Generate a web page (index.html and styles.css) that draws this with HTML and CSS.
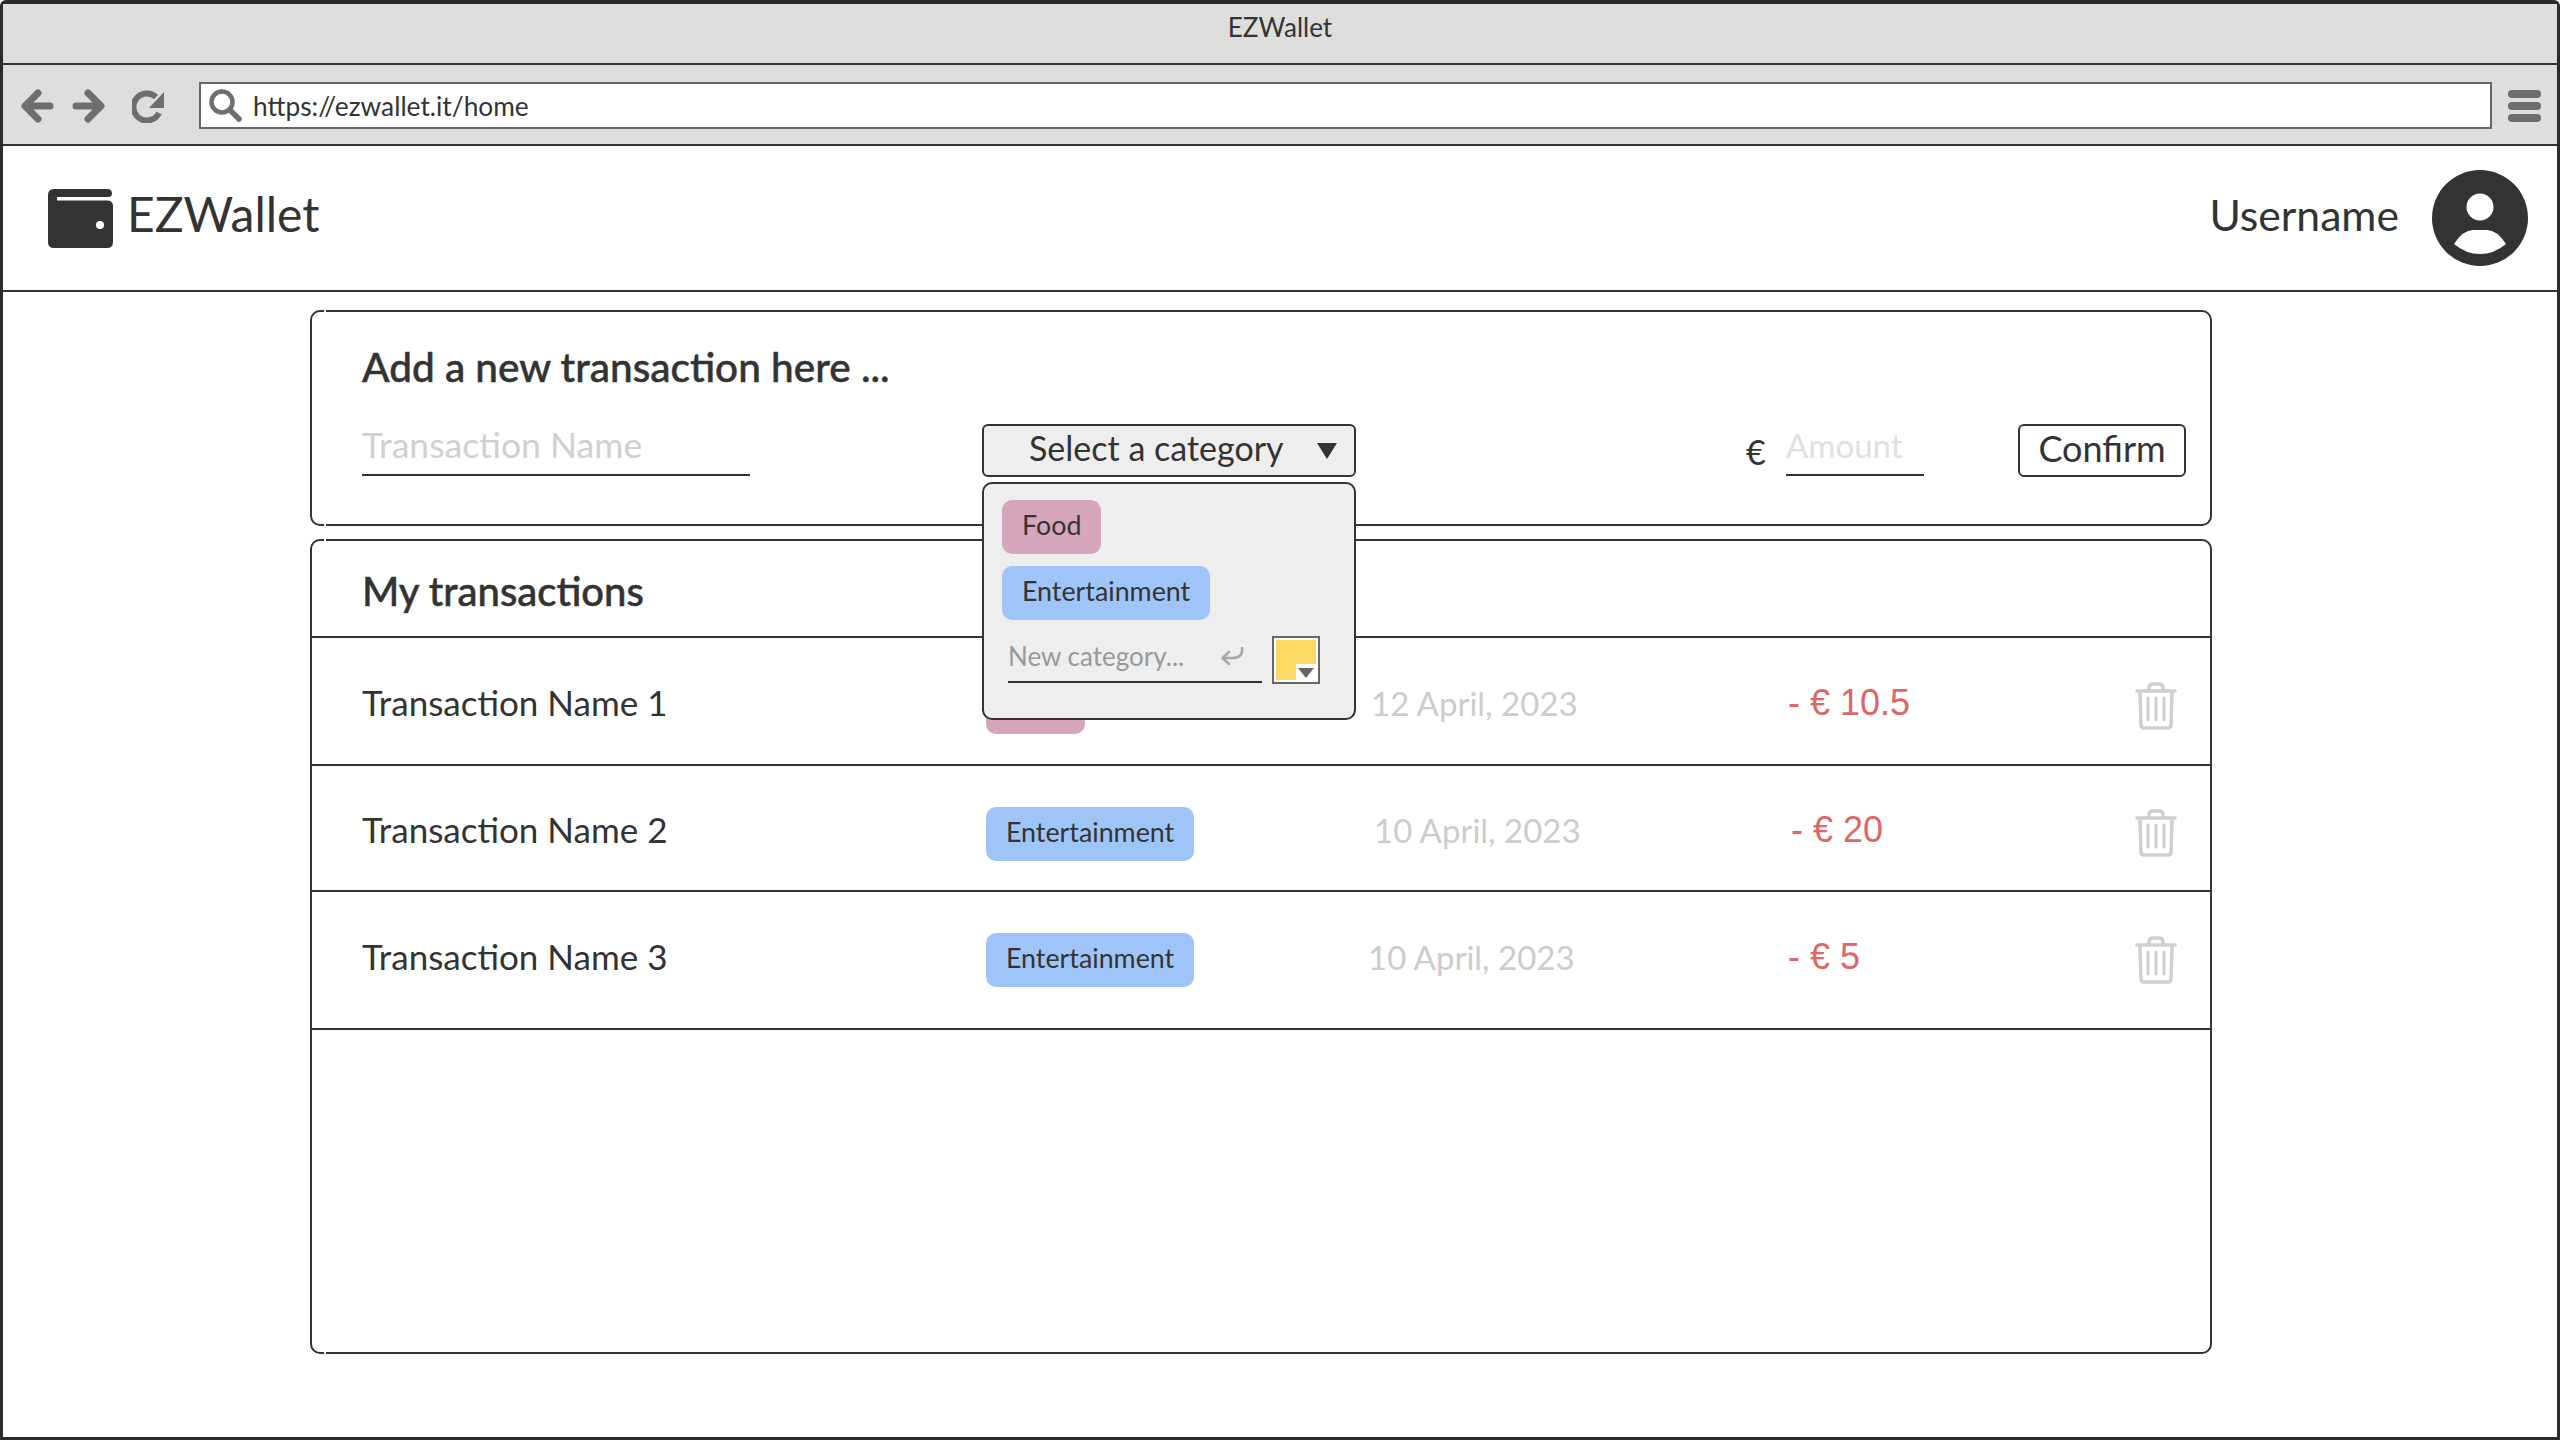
FILE: index.html
```html
<!DOCTYPE html>
<html lang="en">
<head>
    <meta charset="UTF-8">
    <title>EZWallet</title>
    <link rel="stylesheet" href="styles.css">
</head>
<body>
    <div class="browser">
        <div class="title-bar">EZWallet</div>
        <div class="tool-bar">
            <div class="nav-icons">
                <svg class="nav-icon" width="33" height="34" viewBox="0 0 33 34"><path d="M29 17H6M17 4L4 17L17 30" fill="none" stroke="#6e6e6e" stroke-width="7" stroke-linecap="round" stroke-linejoin="round"/></svg>
                <svg class="nav-icon" width="33" height="34" viewBox="0 0 33 34"><path d="M4 17H27M16 4L29 17L16 30" fill="none" stroke="#6e6e6e" stroke-width="7" stroke-linecap="round" stroke-linejoin="round"/></svg>
                <svg class="nav-icon reload" width="33" height="34" viewBox="0 0 33 34"><path d="M24 8A13.500 13.500 0 1 0 27 24" fill="none" stroke="#6e6e6e" stroke-width="6"/><path d="M32 3V19H17Z" fill="#6e6e6e"/></svg>
            </div>
            <div class="address-bar">
                <svg width="33" height="33" viewBox="0 0 33 33"><circle cx="13" cy="13" r="10.500" fill="none" stroke="#6e6e6e" stroke-width="4.500"/><path d="M21 21L30 30" stroke="#6e6e6e" stroke-width="5.500" stroke-linecap="round"/></svg>
                <span class="url">https://ezwallet.it/home</span>
            </div>
            <div class="menu-icon"><span></span><span></span><span></span></div>
        </div>

        <header class="app-header">
            <div class="brand">
                <svg width="65" height="59" viewBox="0 0 65 59"><path d="M6 0H59Q64 0 64 4.500Q64 8 60 8H9V11.500H59Q65 11.500 65 17V53Q65 59 59 59H6Q0 59 0 53V6Q0 0 6 0Z" fill="#333"/><circle cx="52" cy="36" r="4" fill="#fff"/></svg>
                <span class="brand-name">EZWallet</span>
            </div>
            <div class="user">
                <span class="username">Username</span>
                <svg width="96" height="96" viewBox="0 0 96 96"><circle cx="48" cy="48" r="48" fill="#333"/><circle cx="48" cy="37" r="13.500" fill="#fff"/><path d="M22 74Q31 60 41 60H55Q65 60 74 74Q62 84 48 84Q34 84 22 74Z" fill="#fff"/></svg>
            </div>
        </header>

        <main class="content">
            <section class="panel add-panel">
                <h2 class="add-title">Add a new transaction here ...</h2>
                <div class="add-form">
                    <div class="field name-field">Transaction Name</div>
                    <div class="category-select">
                        <button class="select-btn">Select a category<i class="caret"></i></button>
                        <div class="category-menu">
                            <span class="chip food">Food</span>
                            <span class="chip fun">Entertainment</span>
                            <div class="new-category">
                                <div class="new-input">
                                    New category...
                                    <svg width="24" height="20" viewBox="0 0 24 20"><path d="M22 1C23 9 18 11 12 11H3M9 5L2.500 11L9 17" fill="none" stroke="#a6a6a6" stroke-width="2.500" stroke-linecap="round" stroke-linejoin="round"/></svg>
                                </div>
                                <div class="swatch"><i></i></div>
                            </div>
                        </div>
                    </div>
                    <span class="euro">€</span>
                    <div class="field amount-field">Amount</div>
                    <button class="confirm-btn">Confirm</button>
                </div>
            </section>

            <section class="panel list-panel">
                <h2 class="list-title">My transactions</h2>
                <div class="tx-row row-one">
                    <span class="tx-name">Transaction Name 1</span>
                    <span class="chip food">Food</span>
                    <span class="tx-date">12 April, 2023</span>
                    <span class="tx-amount">- € 10.5</span>
                    <svg class="trash" width="42" height="48" viewBox="0 0 42 48"><use href="#trash-icon"/></svg>
                </div>
                <div class="tx-row row-two">
                    <span class="tx-name">Transaction Name 2</span>
                    <span class="chip fun">Entertainment</span>
                    <span class="tx-date">10 April, 2023</span>
                    <span class="tx-amount">- € 20</span>
                    <svg class="trash" width="42" height="48" viewBox="0 0 42 48"><use href="#trash-icon"/></svg>
                </div>
                <div class="tx-row row-three">
                    <span class="tx-name">Transaction Name 3</span>
                    <span class="chip fun">Entertainment</span>
                    <span class="tx-date">10 April, 2023</span>
                    <span class="tx-amount">- € 5</span>
                    <svg class="trash" width="42" height="48" viewBox="0 0 42 48"><use href="#trash-icon"/></svg>
                </div>
            </section>
        </main>
    </div>

    <svg width="0" height="0" class="defs">
        <symbol id="trash-icon" viewBox="0 0 42 48">
            <path d="M2 9H40M14 8V6Q14 2 18 2H24Q28 2 28 6V8M5 10L6 43Q6 46 9 46H33Q36 46 36 43L37 10" fill="none" stroke="#cfcfcf" stroke-width="3.500" stroke-linecap="round" stroke-linejoin="round"/>
            <path d="M13 16V38M21 16V38M29 16V38" stroke="#cfcfcf" stroke-width="3" stroke-linecap="round"/>
        </symbol>
    </svg>
</body>
</html>
```

FILE: styles.css
```css
* {
    box-sizing: border-box;
}

body {
    margin: 0;
    background-color: #fff;
    color: #333;
    font-family: "Lato", "Noto Sans", sans-serif;
}

.defs {
    position: absolute;
}

.browser {
    display: flex;
    flex-direction: column;
    width: 2560px;
    height: 1440px;
    border: 3px solid #2b2b2b;
    border-top-width: 4px;
    border-radius: 6px 6px 0 0;
}

/* Browser chrome */
.title-bar {
    height: 61px;
    background-color: #dededd;
    border-bottom: 2px solid #333;
    text-align: center;
    font-size: 26px;
    line-height: 46px;
}

.tool-bar {
    display: flex;
    align-items: center;
    height: 81px;
    padding: 2px 16px 0 18px;
    background-color: #dededd;
    border-bottom: 2px solid #333;
}

.nav-icons {
    display: flex;
    gap: 18px;
    width: 178px;
}

.nav-icon.reload {
    margin-left: 9px;
}

.address-bar {
    display: flex;
    flex: 1;
    align-items: center;
    gap: 11px;
    height: 47px;
    padding-left: 8px;
    background-color: #fff;
    border: 2px solid #666;
}

.url {
    font-size: 26.3px;
}

.menu-icon {
    display: flex;
    flex-direction: column;
    gap: 4px;
    width: 33px;
    margin-left: 16px;
}

.menu-icon span {
    height: 8px;
    background-color: #6e6e6e;
    border-radius: 4px;
}

/* App header */
.app-header {
    display: flex;
    justify-content: space-between;
    align-items: center;
    height: 146px;
    padding: 0 30px 0 46px;
    border-bottom: 2px solid #333;
    margin: 0 -1px;
}

.brand {
    display: flex;
    align-items: center;
    gap: 14px;
}

.brand-name {
    padding-bottom: 8px;
    font-size: 48px;
    line-height: 1;
}

.user {
    display: flex;
    align-items: center;
    gap: 33px;
}

.username {
    padding-bottom: 8px;
    font-size: 42.7px;
}

/* Content */
.content {
    display: flex;
    flex-direction: column;
    gap: 13px;
    width: 1902px;
    margin: 18px 0 0 307px;
}

.panel {
    position: relative;
    border: 2px solid #333;
    border-radius: 10px;
}

/* small break in the outline next to the left corners */
.panel::before {
    content: "";
    position: absolute;
    top: -2px;
    bottom: -2px;
    left: 12px;
    width: 2px;
    background: linear-gradient(#fff 2px, transparent 2px, transparent calc(100% - 2px), #fff calc(100% - 2px));
}

.add-panel {
    height: 216px;
    padding: 0 14px 0 50px;
}

.add-title {
    margin: 31px 0 0;
    font-size: 40.5px;
    font-weight: 500;
    line-height: 48px;
    -webkit-text-stroke: 0.5px #333;
}

.add-form {
    display: flex;
    align-items: flex-start;
    margin-top: 33px;
}

.field {
    height: 52px;
    border-bottom: 2px solid #333;
    font-size: 35.5px;
    line-height: 42px;
}

.name-field {
    width: 388px;
    color: #d0d0d0;
}

.category-select {
    position: relative;
    width: 374px;
    margin-left: 232px;
}

.select-btn {
    display: block;
    width: 100%;
    height: 53px;
    padding: 0 0 6px 45px;
    background-color: #eee;
    border: 2px solid #333;
    border-radius: 6px;
    color: #333;
    font: inherit;
    font-size: 34px;
    text-align: left;
}

.caret {
    position: absolute;
    top: 19px;
    right: 19px;
    width: 0;
    height: 0;
    border-top: 16px solid #333;
    border-left: 10px solid transparent;
    border-right: 10px solid transparent;
}

.category-menu {
    position: absolute;
    top: 58px;
    left: 0;
    z-index: 5;
    display: flex;
    flex-direction: column;
    align-items: flex-start;
    gap: 12px;
    width: 374px;
    height: 238px;
    padding: 16px 0 0 18px;
    background-color: #eee;
    border: 2px solid #333;
    border-radius: 10px;
}

.chip {
    display: inline-block;
    height: 54px;
    padding: 0 20px;
    border-radius: 10px;
    font-size: 26.8px;
    line-height: 50px;
}

.chip.food {
    background-color: #d6a6bd;
}

.chip.fun {
    background-color: #9fc5f8;
}

.new-category {
    display: flex;
    align-items: flex-start;
    margin-top: 4px;
}

.new-input {
    display: flex;
    justify-content: space-between;
    width: 254px;
    height: 45px;
    margin: 2px 0 0 6px;
    padding-right: 18px;
    border-bottom: 2px solid #333;
    color: #999;
    font-size: 26px;
    line-height: 37px;
}

.new-input svg {
    margin-top: 9px;
}

.swatch {
    position: relative;
    width: 48px;
    height: 48px;
    margin-left: 10px;
    background-color: #ffd966;
    border: 4px solid #fff;
    outline: 2px solid #666;
    outline-offset: -2px;
}

.swatch::after {
    content: "";
    position: absolute;
    right: 0;
    bottom: 0;
    width: 20px;
    height: 16px;
    background-color: #fff;
}

.swatch i {
    position: absolute;
    right: 2px;
    bottom: 2px;
    z-index: 1;
    border-top: 10px solid #666;
    border-left: 8px solid transparent;
    border-right: 8px solid transparent;
}

.euro {
    width: 40px;
    margin-left: 390px;
    padding-top: 6px;
    font-size: 34px;
    line-height: 44px;
}

.amount-field {
    width: 138px;
    color: #e0e0e0;
    font-size: 33px;
}

.confirm-btn {
    width: 168px;
    height: 53px;
    margin-left: 94px;
    padding: 0 0 6px;
    background-color: #fff;
    border: 2px solid #333;
    border-radius: 6px;
    color: #333;
    font: inherit;
    font-size: 36px;
}

.list-panel {
    height: 815px;
}

.list-title {
    height: 97px;
    margin: 0;
    padding-left: 50px;
    border-bottom: 2px solid #333;
    font-size: 40px;
    font-weight: 500;
    line-height: 100px;
    -webkit-text-stroke: 0.5px #333;
}

/* Transaction rows */
.tx-row {
    display: grid;
    grid-template-columns: 624px 385px 417px 1fr 42px;
    align-items: center;
    padding: 0 33px 0 50px;
    border-bottom: 2px solid #333;
    font-size: 35px;
}

.tx-row .chip {
    justify-self: start;
    margin-top: 6px;
}

.tx-name {
    padding-bottom: 4px;
}

.row-one {
    height: 128px;
    padding-top: 6px;
}

.row-two {
    height: 126px;
    padding-top: 6px;
}

.row-three {
    height: 138px;
    padding-bottom: 4px;
}

.row-three .chip {
    margin-top: 3px;
}

.tx-date {
    padding-bottom: 2px;
    color: #ccc;
    font-size: 33px;
}

.tx-amount {
    padding-bottom: 2px;
    color: #e06666;
    font-family: "Liberation Sans", sans-serif;
    font-size: 36px;
}

.row-two .tx-date {
    margin-left: 3px;
}

.row-two .tx-amount {
    margin-left: 3px;
}

.row-three .tx-date {
    margin-left: -3px;
}

.trash {
    margin-top: 3px;
}
```
